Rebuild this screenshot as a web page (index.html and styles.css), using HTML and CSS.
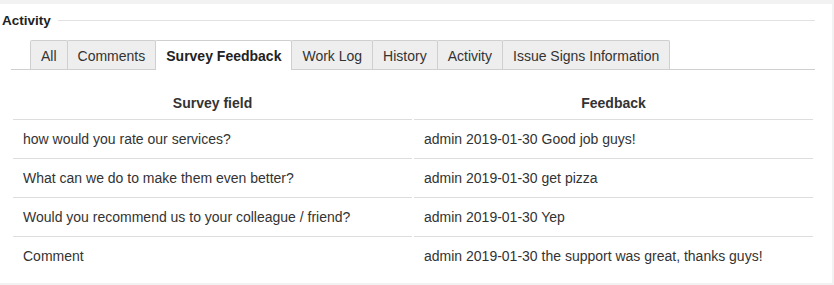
FILE: index.html
```html
<!DOCTYPE html>
<html lang="en">
<head>
  <meta charset="UTF-8" />
  <title>Activity</title>
  <link rel="stylesheet" href="styles.css">
</head>
<body>
  <div class="panel">
    <div class="panel-title">
      <h3>Activity</h3>
      <div class="rule"></div>
    </div>
    <div class="panel-body">
      <ul class="tabs">
        <li>All</li>
        <li>Comments</li>
        <li class="active">Survey Feedback</li>
        <li>Work Log</li>
        <li>History</li>
        <li>Activity</li>
        <li>Issue Signs Information</li>
      </ul>
      <div class="tab-content">
        <table class="survey">
          <thead>
            <tr><th>Survey field</th><th>Feedback</th></tr>
          </thead>
          <tbody>
            <tr><td>how would you rate our services?</td><td>admin 2019-01-30 Good job guys!</td></tr>
            <tr><td>What can we do to make them even better?</td><td>admin 2019-01-30 get pizza</td></tr>
            <tr><td>Would you recommend us to your colleague / friend?</td><td>admin 2019-01-30 Yep</td></tr>
            <tr><td>Comment</td><td>admin 2019-01-30 the support was great, thanks guys!</td></tr>
          </tbody>
        </table>
      </div>
    </div>
  </div>
</body>
</html>
```

FILE: styles.css
```css
body {
  margin: 0;
  background-color: #f2f2f2;
  font-family: "Liberation Sans", Arial, sans-serif;
  font-size: 14px;
  color: #333;
}
.panel {
  background-color: #fff;
  width: 813px;
  margin-top: 4px;
  padding: 0 17px 8px 2px;
}
.panel-title {
  display: flex;
  align-items: center;
  height: 32px;
}
.panel-title h3 {
  margin: 0;
  font-size: 13.5px;
  font-weight: bold;
  color: #222;
}
.panel-title .rule {
  flex: 1;
  height: 1px;
  margin-left: 7px;
  background-color: #e2e2e2;
}
.panel-body {
  margin: 4px 0 0 9px;
}
.tabs {
  display: flex;
  list-style: none;
  margin: 0;
  padding: 0 0 0 19px;
  border-bottom: 1px solid #cfcfcf;
}
.tabs li {
  height: 28px;
  line-height: 31px;
  padding: 0 10px;
  margin-bottom: -1px;
  margin-left: -1px;
  background-color: #eee;
  border: 1px solid #cfcfcf;
  border-bottom: none;
  border-top-right-radius: 2px;
  border-top-left-radius: 2px;
  color: #333;
}
.tabs li:first-child {
  margin-left: 0;
}
.tabs li.active {
  height: 29px;
  background-color: #fff;
  font-weight: bold;
  color: #222;
}
.tab-content {
  padding-top: 16px;
}
.survey {
  width: 100%;
  border-collapse: separate;
  border-spacing: 2px 0;
  table-layout: fixed;
}
.survey th {
  font-weight: bold;
  text-align: center;
  line-height: 18px;
  padding: 8px 10px 7px;
  border-bottom: 1px solid #ddd;
  color: #333;
}
.survey td {
  line-height: 18px;
  padding: 10px 10px 10px;
  border-bottom: 1px solid #ddd;
}
.survey tbody tr:last-child td {
  border-bottom: none;
}
```
